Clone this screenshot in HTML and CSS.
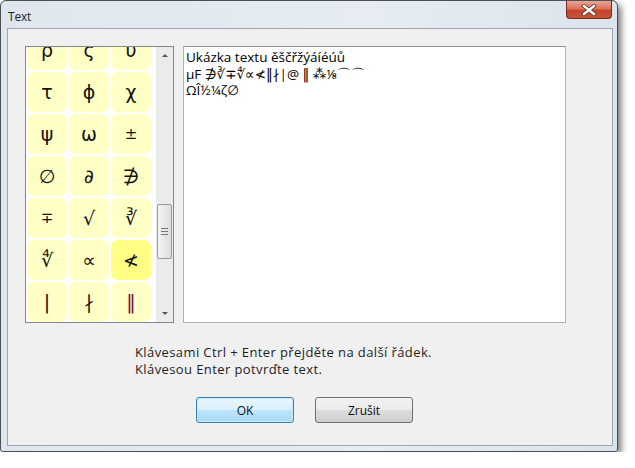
FILE: index.html
```html
<!DOCTYPE html>
<html>
<head>
<meta charset="utf-8">
<link rel="stylesheet" href="styles.css">
</head>
<body>
<div class="window">
  <div class="titlebar">
    <span class="title">Text</span>
    <div class="close">
      <svg width="16" height="12" viewBox="0 0 16 12">
        <path d="M3 2 L13 10 M13 2 L3 10" stroke="#5a2a20" stroke-width="4" stroke-linecap="square"/>
        <path d="M3 2 L13 10 M13 2 L3 10" stroke="#ffffff" stroke-width="2.4" stroke-linecap="square"/>
      </svg>
    </div>
  </div>
  <div class="client">
    <div class="main">
      <div class="symbols">
        <div class="viewport">
          <div class="grid">
            <div class="cell">ρ</div><div class="cell">ς</div><div class="cell">υ</div>
            <div class="cell">τ</div><div class="cell">ϕ</div><div class="cell">χ</div>
            <div class="cell">ψ</div><div class="cell">ω</div><div class="cell small">±</div>
            <div class="cell">∅</div><div class="cell">∂</div><div class="cell">∌</div>
            <div class="cell small">∓</div><div class="cell">√</div><div class="cell">∛</div>
            <div class="cell">∜</div><div class="cell">∝</div><div class="cell sel">≮</div>
            <div class="cell">|</div><div class="cell">∤</div><div class="cell red">‖</div>
          </div>
        </div>
        <div class="scrollbar">
          <div class="arrow up"></div>
          <div class="track">
            <div class="thumb"><span></span><span></span><span></span></div>
          </div>
          <div class="arrow down"></div>
        </div>
      </div>
      <div class="textarea">Ukázka textu ěščřžýáíéúů<br>μF ∌∛∓∜∝≮‖∤|@ ‖ ⁂⅛⌒⌒<br>ΩÎ½¼ζ∅</div>
    </div>
    <div class="message">Klávesami Ctrl + Enter přejděte na další řádek.<br>Klávesou Enter potvrďte text.</div>
    <div class="buttons">
      <button class="btn default">OK</button>
      <button class="btn">Zrušit</button>
    </div>
  </div>
</div>
</body>
</html>
```

FILE: styles.css
```css
html, body {
  margin: 0;
  padding: 0;
  background: #ffffff;
}
body {
  font-family: "Open Sans", "Noto Sans", sans-serif;
}
.window {
  box-sizing: border-box;
  width: 618px;
  height: 452px;
  border: 1px solid #4a4f55;
  border-radius: 6px 6px 3px 3px;
  background: linear-gradient(90deg, #dfe6ee 0%, #e6ecf2 60%, #dbe3ec 100%);
  box-shadow: 3px 4px 7px rgba(0, 0, 0, 0.55);
  display: flex;
  flex-direction: column;
}
.titlebar {
  height: 27px;
  display: flex;
  align-items: flex-start;
  justify-content: space-between;
  padding-left: 7px;
  padding-right: 5px;
}
.title {
  font-size: 12px;
  color: #1b1b1b;
  margin-top: 7px;
  letter-spacing: -0.2px;
}
.close {
  width: 46px;
  height: 18px;
  box-sizing: border-box;
  border: 1px solid #7a2a1c;
  border-top: none;
  border-radius: 0 0 4px 4px;
  background: linear-gradient(180deg, #e9a693 0%, #d9735c 45%, #c5442c 55%, #c8553a 100%);
  display: flex;
  align-items: center;
  justify-content: center;
}
.close svg { display: block; }
.client {
  box-sizing: border-box;
  margin: 0 4px 5px 6px;
  flex: 1;
  border: 1px solid #9ba6b2;
  background: #f0f0f0;
  padding: 17px 0 0 17px;
  display: flex;
  flex-direction: column;
}
.main {
  display: flex;
  gap: 9px;
  height: 277px;
}
.symbols {
  box-sizing: border-box;
  width: 149px;
  height: 277px;
  border: 1px solid #828790;
  background: #ffffff;
  display: flex;
}
.viewport {
  width: 130px;
  overflow: hidden;
  padding-left: 1px;
}
.grid {
  margin-top: -17px;
  display: grid;
  grid-template-columns: repeat(3, 40px);
  grid-auto-rows: 40px;
  gap: 2px;
}
.cell {
  background: #ffffc6;
  border-radius: 7px;
  display: flex;
  align-items: center;
  justify-content: center;
  font-family: "DejaVu Sans", sans-serif;
  font-size: 19px;
  color: #111;
}
.cell.small { font-size: 15px; }
.cell.sel { background: #ffff85; }
.cell.red { color: #7a1040; }
.scrollbar {
  width: 17px;
  margin-left: auto;
  background: #ebebeb;
  display: flex;
  flex-direction: column;
}
.arrow {
  height: 17px;
  display: flex;
  align-items: center;
  justify-content: center;
}
.arrow::before {
  content: "";
  border-left: 3px solid transparent;
  border-right: 3px solid transparent;
}
.arrow.up::before { border-bottom: 3px solid #555; }
.arrow.down::before { border-top: 3px solid #555; }
.track {
  flex: 1;
  padding-top: 140px;
}
.thumb {
  box-sizing: border-box;
  margin: 0 1px;
  height: 55px;
  border: 1px solid #9a9a9a;
  border-radius: 2px;
  background: linear-gradient(90deg, #f4f4f4, #dcdcdc);
  display: flex;
  flex-direction: column;
  align-items: center;
  justify-content: center;
  gap: 2px;
}
.thumb span {
  display: block;
  width: 7px;
  height: 1px;
  background: #777;
}
.textarea {
  box-sizing: border-box;
  width: 383px;
  height: 277px;
  border: 1px solid #adb2b8;
  border-top-color: #8e9399;
  background: #ffffff;
  padding: 2px 2px;
  font-size: 13.5px;
  line-height: 16.5px;
  color: #000;
  font-family: "Open Sans", "DejaVu Sans", sans-serif;
}
.message {
  margin-top: 21px;
  margin-left: 110px;
  font-family: "Open Sans", "Noto Sans", sans-serif;
  font-size: 13px;
  letter-spacing: 0.4px;
  line-height: 17px;
  color: #1e1e1e;
}
.buttons {
  display: flex;
  gap: 21px;
  margin-top: 19px;
  margin-left: 171px;
}
.btn {
  box-sizing: border-box;
  width: 98px;
  height: 26px;
  border: 1px solid #707070;
  border-radius: 3px;
  background: linear-gradient(180deg, #f2f2f2 0%, #ebebeb 50%, #dddddd 51%, #cfcfcf 100%);
  font-family: "Open Sans", "Noto Sans", sans-serif;
  font-size: 12px;
  color: #111;
  padding: 0;
}
.btn.default {
  border-color: #3c7fb1;
  background: linear-gradient(180deg, #eaf6fd 0%, #d9f0fc 50%, #bee6fd 51%, #a7d9f5 100%);
  box-shadow: inset 0 0 0 1px #c8e9fb;
}
```
